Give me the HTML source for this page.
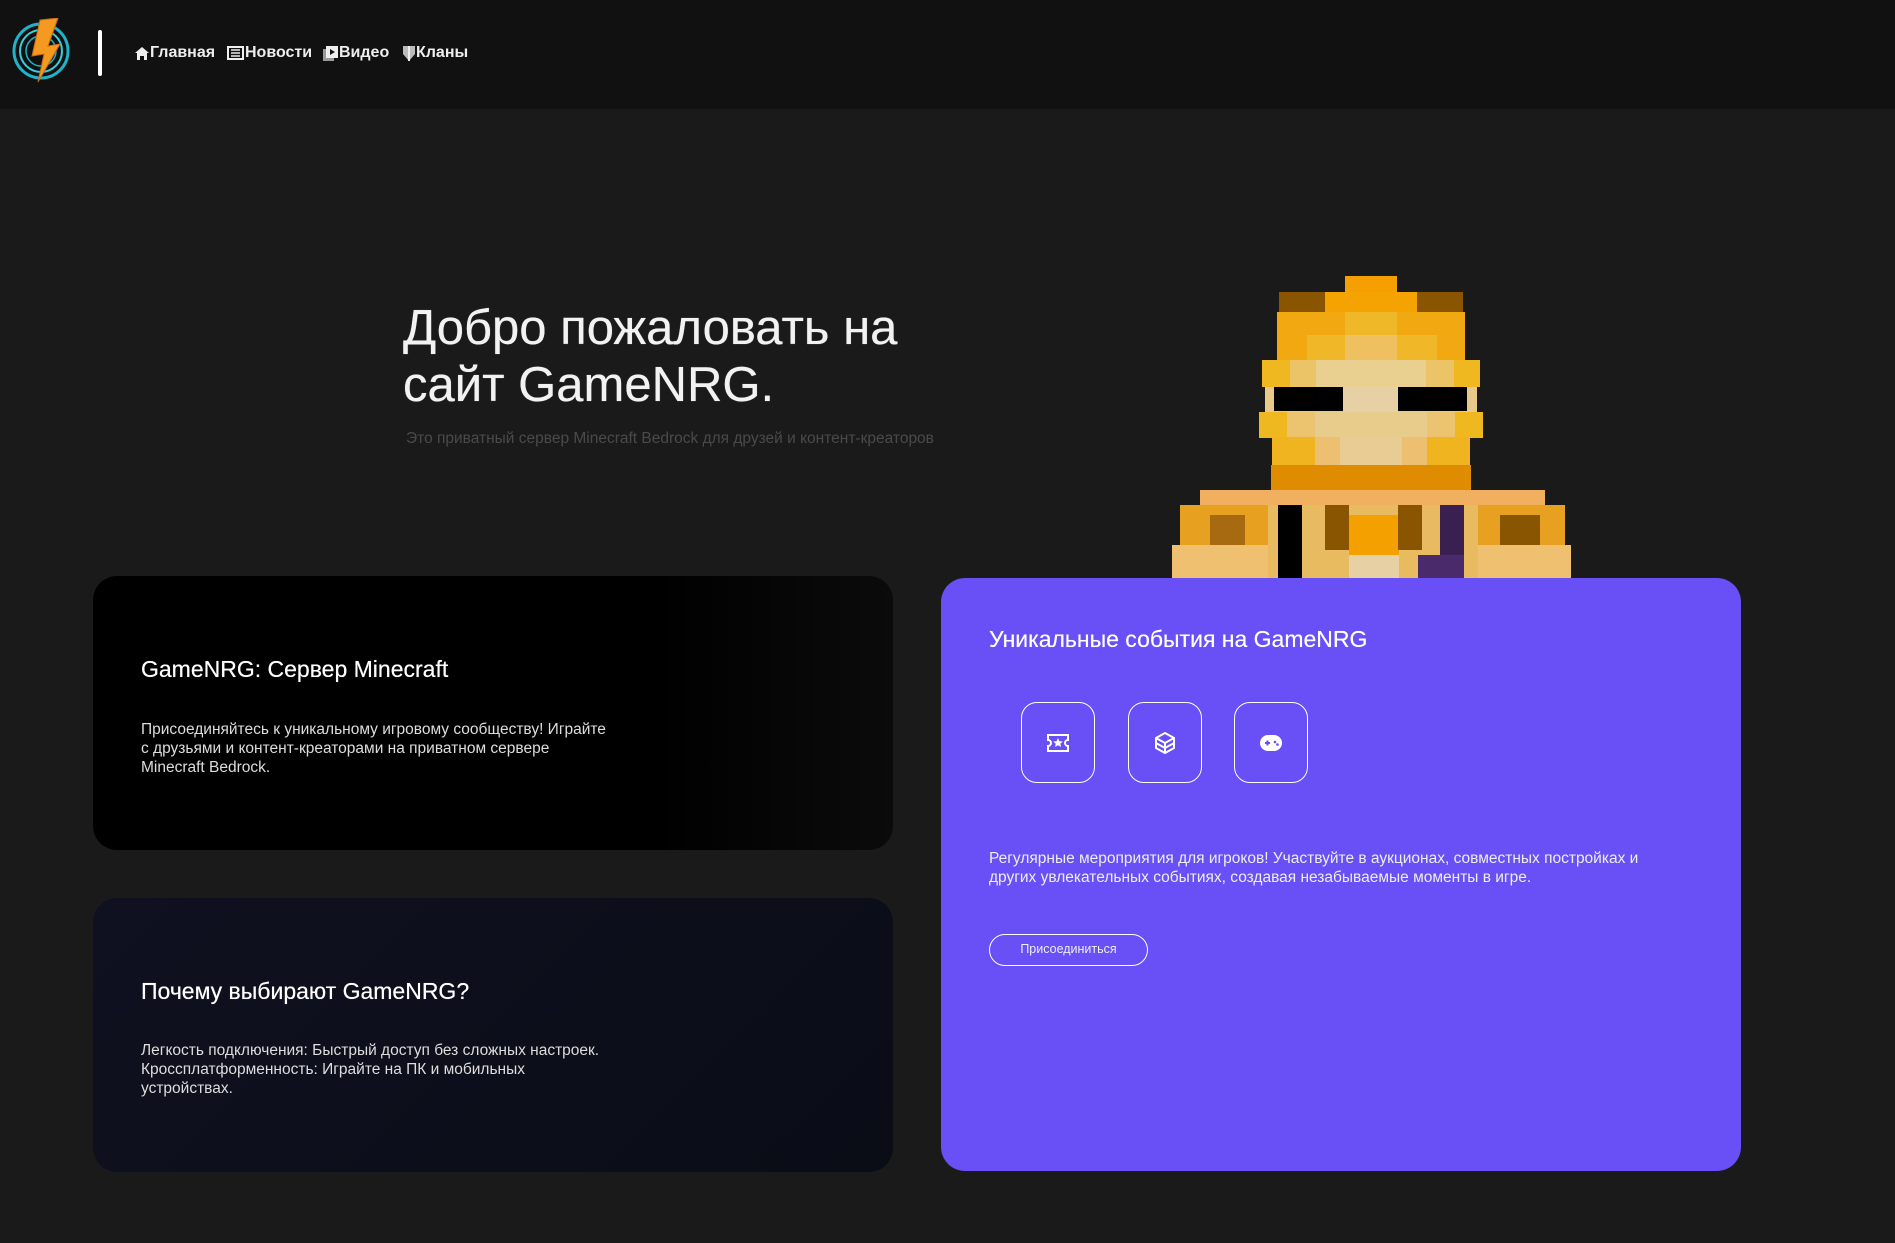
<!DOCTYPE html>
<html><head><meta charset="utf-8">
<style>
*{margin:0;padding:0;box-sizing:border-box}
body{width:1895px;height:1243px;background:#1a1a1a;font-family:"Liberation Sans","Noto Sans CJK SC",sans-serif;color:#fff;position:relative;overflow:hidden}
.hdr{position:absolute;left:0;top:0;width:1895px;height:109px;background:#111}
.div{position:absolute;left:98px;top:30px;width:4px;height:46px;background:#fff;border-radius:2px}
.nav{position:absolute;top:44px;font-size:16px;font-weight:bold;color:#eee;display:flex;align-items:center;height:18px;line-height:18px}
.nav svg{margin-right:1px}
h1{position:absolute;left:403px;top:300px;font-size:49px;font-weight:normal;line-height:57px;color:#f2f2f2;text-shadow:0 0 0.6px #f2f2f2}
.sub{position:absolute;left:406px;top:430px;font-size:15.5px;color:#4a4a4a}
.card{position:absolute;border-radius:24px}
.card h2{position:absolute;font-size:23px;font-weight:normal;text-shadow:0 0 0.5px #fff}
.card p{position:absolute;font-size:15.5px;line-height:19px;color:#ddd;font-weight:300}
.ib{position:absolute;top:124px;width:74px;height:81px;border:1.5px solid #fff;border-radius:16px;display:flex;align-items:center;justify-content:center}
.btn{position:absolute;left:48px;top:356px;width:159px;height:32px;border:1.5px solid #fff;border-radius:16px;font-size:12.5px;text-align:center;line-height:29px;color:#eee}
</style></head><body>
<div class="hdr">
<svg style="position:absolute;left:10px;top:18px" width="66" height="66" viewBox="0 0 66 66">
<circle cx="31" cy="33" r="27" fill="none" stroke="#1fb3c9" stroke-width="3"/>
<circle cx="31" cy="33" r="21" fill="none" stroke="#38d0dc" stroke-width="2"/>
<circle cx="31" cy="33" r="15" fill="none" stroke="#1fb3c9" stroke-width="1.5"/>
<path d="M30 2 L48 0 L38 28 L50 26 L28 64 L34 36 L22 38 Z" fill="#f59a20" stroke="#c86a10" stroke-width="1"/>
</svg>
<div class="div"></div>
<div class="nav" style="left:135px"><svg width="14" height="13" viewBox="0 0 14 13"><path d="M7 0L14 6h-2v7H9V9H5v4H2V6H0z" fill="#eee"/></svg>Главная</div>
<div class="nav" style="left:227px"><svg width="17" height="14" viewBox="0 0 17 14"><rect x="1" y="1" width="15" height="12" fill="none" stroke="#eee" stroke-width="2"/><path d="M4 4h9M4 7h9M4 10h9" stroke="#eee" stroke-width="1.5"/></svg>Новости</div>
<div class="nav" style="left:323px"><svg width="15" height="15" viewBox="0 0 15 15"><rect x="0" y="3" width="11" height="12" fill="#999"/><rect x="3" y="0" width="12" height="12" fill="#eee"/><path d="M7 3v6l5-3z" fill="#111"/></svg>Видео</div>
<div class="nav" style="left:403px"><svg width="12" height="15" viewBox="0 0 12 15"><path d="M0 0h12v8l-6 7-6-7z" fill="#bbb"/><path d="M6 0v15" stroke="#eee" stroke-width="2"/></svg>Кланы</div>
</div>
<h1>Добро пожаловать на<br>сайт GameNRG.</h1>
<div class="sub">Это приватный сервер Minecraft Bedrock для друзей и контент-креаторов</div>

<svg style="position:absolute;left:1170px;top:276px" width="405" height="302" viewBox="1170 276 405 302">
<rect x="1345" y="276" width="52" height="20" fill="#f5a000"/>
<rect x="1279" y="292" width="184" height="22" fill="#f5a300"/>
<rect x="1279" y="292" width="46" height="22" fill="#8a5500"/>
<rect x="1417" y="292" width="46" height="22" fill="#8a5500"/>
<rect x="1277" y="312" width="188" height="50" fill="#f2a810"/>
<rect x="1307" y="335" width="130" height="27" fill="#f0b828"/>
<rect x="1345" y="312" width="52" height="50" fill="#efb828"/>
<rect x="1345" y="335" width="52" height="27" fill="#eec060"/>
<rect x="1262" y="360" width="218" height="27" fill="#f0b820"/>
<rect x="1290" y="360" width="164" height="27" fill="#ecc468"/>
<rect x="1316" y="360" width="110" height="27" fill="#e9d090"/>
<rect x="1265" y="387" width="212" height="25" fill="#e9c98a"/>
<rect x="1274" y="387" width="69" height="24" fill="#000"/>
<rect x="1398" y="387" width="69" height="24" fill="#000"/>
<rect x="1343" y="387" width="55" height="25" fill="#e6d0a4"/>
<rect x="1259" y="412" width="224" height="26" fill="#f0b820"/>
<rect x="1287" y="412" width="168" height="26" fill="#ecc470"/>
<rect x="1315" y="412" width="112" height="26" fill="#e8cc8c"/>
<rect x="1272" y="437" width="198" height="28" fill="#f0b420"/>
<rect x="1315" y="437" width="112" height="28" fill="#ecc070"/>
<rect x="1340" y="437" width="62" height="28" fill="#e8cc94"/>
<rect x="1271" y="465" width="200" height="28" fill="#e08c00"/>
<rect x="1200" y="490" width="345" height="20" fill="#f0b060"/>
<rect x="1180" y="505" width="90" height="73" fill="#e8a020"/>
<rect x="1172" y="545" width="100" height="33" fill="#eec070"/>
<rect x="1210" y="515" width="35" height="30" fill="#a86a10"/>
<rect x="1470" y="505" width="95" height="73" fill="#e8a020"/>
<rect x="1470" y="545" width="101" height="33" fill="#eec070"/>
<rect x="1500" y="515" width="40" height="30" fill="#8a5500"/>
<rect x="1268" y="505" width="210" height="73" fill="#e8bb60"/>
<rect x="1278" y="505" width="24" height="73" fill="#000"/>
<rect x="1325" y="505" width="24" height="45" fill="#8a5500"/>
<rect x="1349" y="515" width="50" height="45" fill="#f3a000"/>
<rect x="1398" y="505" width="24" height="45" fill="#8a5500"/>
<rect x="1440" y="505" width="24" height="73" fill="#3a2050"/>
<rect x="1418" y="555" width="46" height="23" fill="#4a2a6a"/>
<rect x="1349" y="555" width="50" height="23" fill="#e6d0a4"/>
</svg>

<div class="card" style="left:93px;top:576px;width:800px;height:274px;background:linear-gradient(90deg,#000 70%,#0b0b0b)">
<h2 style="left:48px;top:80px">GameNRG: Сервер Minecraft</h2>
<p style="left:48px;top:144px;width:468px">Присоединяйтесь к уникальному игровому сообществу! Играйте с друзьями и контент-креаторами на приватном сервере Minecraft Bedrock.</p>
</div>
<div class="card" style="left:93px;top:898px;width:800px;height:274px;background:linear-gradient(135deg,#0f1120,#0a0c16)">
<h2 style="left:48px;top:80px">Почему выбирают GameNRG?</h2>
<p style="left:48px;top:143px;width:470px">Легкость подключения: Быстрый доступ без сложных настроек. Кроссплатформенность: Играйте на ПК и мобильных устройствах.</p>
</div>
<div class="card" style="left:941px;top:578px;width:800px;height:593px;background:#684ff6">
<h2 style="left:48px;top:48px">Уникальные события на GameNRG</h2>
<div class="ib" style="left:80px"><svg width="22" height="20" viewBox="0 0 22 20"><path d="M1 2h20v5a3 3 0 0 0 0 6v5H1v-5a3 3 0 0 0 0-6z" fill="none" stroke="#fff" stroke-width="2"/><path d="M11 5l1.5 3.2 3.4.3-2.6 2.2.8 3.3L11 12.3 8 14l.8-3.3-2.6-2.2 3.4-.3z" fill="#fff"/></svg></div>
<div class="ib" style="left:187px"><svg width="20" height="22" viewBox="0 0 20 22"><path d="M10 1L19 6v10l-9 5-9-5V6z M1 6l9 5 9-5 M10 11v10 M1 11l9 5 9-5" fill="none" stroke="#fff" stroke-width="2"/></svg></div>
<div class="ib" style="left:293px"><svg width="24" height="18" viewBox="0 0 24 18"><rect x="1" y="1" width="22" height="16" rx="8" fill="#fff"/><path d="M6 9h5M8.5 6.5v5" stroke="#684ff6" stroke-width="2"/><circle cx="16" cy="8" r="1.3" fill="#684ff6"/><circle cx="18.5" cy="10.5" r="1.3" fill="#684ff6"/></svg></div>
<p style="left:48px;top:271px;width:680px;color:#eee">Регулярные мероприятия для игроков! Участвуйте в аукционах, совместных постройках и других увлекательных событиях, создавая незабываемые моменты в игре.</p>
<div class="btn">Присоединиться</div>
</div>
</body></html>
